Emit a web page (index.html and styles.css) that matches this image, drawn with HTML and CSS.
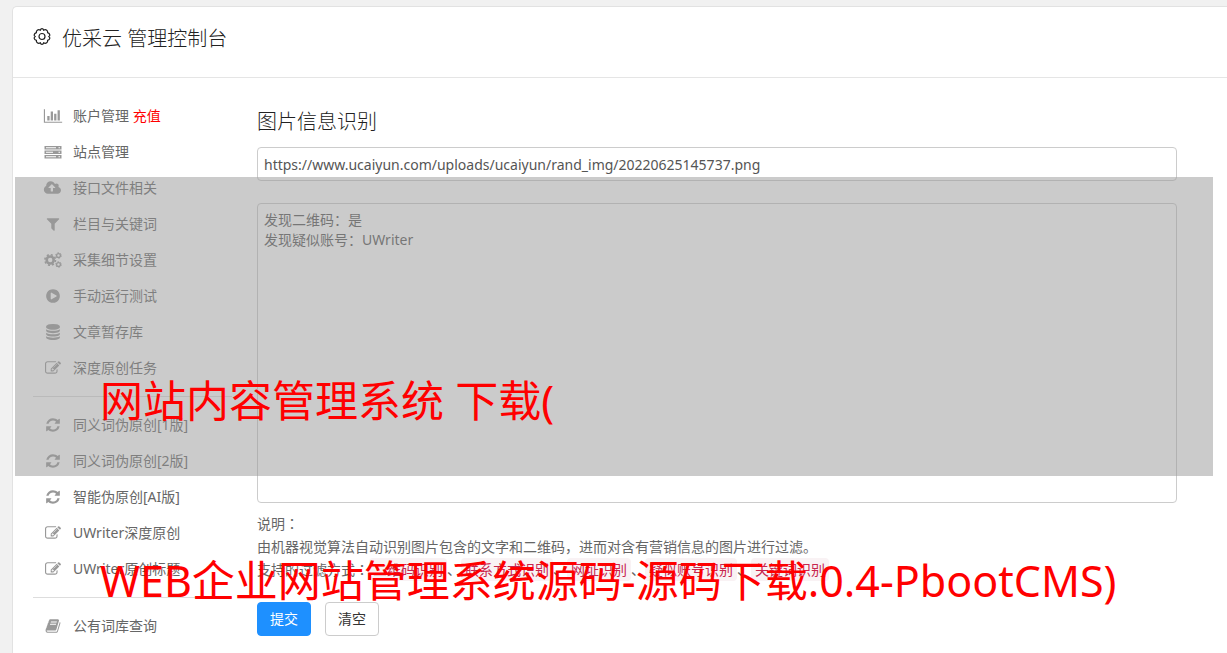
FILE: index.html
```
<!DOCTYPE html>
<html lang="zh-CN">
<head>
<meta charset="utf-8">
<title>优采云 管理控制台</title>
<link rel="stylesheet" href="styles.css">
</head>
<body>
<svg class="sprite" aria-hidden="true">
  <symbol id="edit" viewBox="0 0 1792 1792"><path d="M888 1184l116-116-152-152-116 116v56h96v96h56zm440-720q-16-16-33 1l-350 350q-17 17-1 33t33-1l350-350q17-17 1-33zm80 594v190q0 119-84.500 203.500t-203.500 84.500h-832q-119 0-203.500-84.500t-84.500-203.500v-832q0-119 84.500-203.500t203.500-84.500h832q63 0 117 25 15 7 18 23 3 17-9 29l-49 49q-14 14-32 8-23-6-45-6h-832q-66 0-113 47t-47 113v832q0 66 47 113t113 47h832q66 0 113-47t47-113v-126q0-13 9-22l64-64q15-15 35-7t20 29zm-96-738l288 288-672 672h-288v-288zm444 132l-92 92-288-288 92-92q28-28 68-28t68 28l152 152q28 28 28 68t-28 68z"/></symbol>
  <symbol id="refresh" viewBox="0 0 1792 1792"><path d="M1639 1056q0 5-1 7-64 268-268 434.500t-478 166.500q-146 0-282.500-55t-243.500-157l-129 129q-19 19-45 19t-45-19-19-45v-448q0-26 19-45t45-19h448q26 0 45 19t19 45-19 45l-137 137q71 66 161 102t187 36q134 0 250-65t186-179q11-17 53-117 8-23 30-23h192q13 0 22.500 9.500t9.500 22.500zm25-800v448q0 26-19 45t-45 19h-448q-26 0-45-19t-19-45 19-45l138-138q-148-137-349-137-134 0-250 65t-186 179q-11 17-53 117-8 23-30 23h-199q-13 0-22.500-9.500t-9.500-22.500v-7q65-268 270-434.500t480-166.500q146 0 284 55.500t245 156.500l130-129q19-19 45-19t45 19 19 45z"/></symbol>
</svg>
<div class="panel">
  <header class="panel-head">
    <svg class="gear" viewBox="0 0 18 18"><path d="M9 1.200Q10.300 1.200 10.600 2.600Q12.500 1.800 13.700 2.700Q14.900 3.600 14.600 5.100Q16.600 5.800 16.800 7.300Q17 8.300 15.900 9Q17 9.900 16.800 10.900Q16.500 12.300 14.600 12.900Q14.900 14.500 13.700 15.300Q12.400 16.200 10.600 15.400Q10.300 16.800 9 16.800Q7.700 16.800 7.400 15.400Q5.600 16.200 4.300 15.300Q3.100 14.500 3.400 12.900Q1.500 12.300 1.200 10.900Q1 9.900 2.100 9Q1 8.300 1.200 7.300Q1.400 5.800 3.400 5.100Q3.100 3.600 4.300 2.700Q5.500 1.800 7.400 2.600Q7.700 1.200 9 1.200z"/><circle cx="9" cy="9" r="3"/></svg>
    <h1 class="title">优采云 管理控制台</h1>
  </header>
  <div class="panel-body">
    <nav class="menu">
      <a class="item" href="#"><svg class="icon" viewBox="0 0 2048 1792"><path d="M640 896v512h-256v-512h256zm384-512v1024h-256v-1024h256zm1024 1152v128h-2048v-1536h128v1408h1920zm-640-896v768h-256v-768h256zm384-384v1152h-256v-1152h256z"/></svg><span>账户管理 <b class="recharge">充值</b></span></a>
      <a class="item" href="#"><svg class="icon" viewBox="0 0 18 16"><path fill-rule="evenodd" d="M.5 2h17v3.500H.5zM.5 6.500h17V10H.5zM.5 11h17v3.500H.5zM2 3.200v1h10v-1zM2 7.700v1h7v-1zM2 12.200v1h10v-1zM14.500 3.200v1h1.500v-1zM14.500 7.700v1h1.500v-1zM14.500 12.200v1h1.500v-1z"/></svg><span>站点管理</span></a>
      <a class="item" href="#"><svg class="icon" viewBox="0 0 1920 1792"><path d="M1216 864q0-14-9-23l-352-352q-9-9-23-9t-23 9l-351 351q-10 12-10 24 0 14 9 23t23 9h224v352q0 13 9.500 22.500t22.500 9.500h192q13 0 22.500-9.500t9.500-22.500v-352h224q13 0 22.500-9.500t9.500-22.500zm640 288q0 159-112.500 271.500t-271.500 112.500h-1088q-185 0-316.500-131.500t-131.500-316.500q0-130 70-240t188-165q-2-30-2-43 0-212 150-362t362-150q156 0 285.500 87t188.500 231q71-62 166-62 106 0 181 75t75 181q0 76-41 138 130 31 213.500 135.500t83.500 238.500z"/></svg><span>接口文件相关</span></a>
      <a class="item" href="#"><svg class="icon" viewBox="0 0 1792 1792"><path d="M1595 295q17 41-14 70l-493 493v742q0 42-39 59-13 5-25 5-27 0-45-19l-256-256q-19-19-19-45v-486l-493-493q-31-29-14-70 17-39 59-39h1280q42 0 59 39z"/></svg><span>栏目与关键词</span></a>
      <a class="item" href="#"><svg class="icon" viewBox="0 0 18 16"><g fill="none" stroke="currentColor"><circle cx="6.200" cy="8" r="3.500" stroke-width="2.600"/><circle cx="6.200" cy="8" r="5.300" stroke-width="1.600" stroke-dasharray="2.080 2.080"/><circle cx="14.500" cy="3.500" r="1.900" stroke-width="1.300"/><circle cx="14.500" cy="3.500" r="2.800" stroke-dasharray="1.470 1.470"/><circle cx="14.500" cy="12.500" r="1.900" stroke-width="1.300"/><circle cx="14.500" cy="12.500" r="2.800" stroke-dasharray="1.470 1.470"/></g></svg><span>采集细节设置</span></a>
      <a class="item" href="#"><svg class="icon" viewBox="0 0 1792 1792"><path d="M896 128q209 0 385.500 103t279.500 279.500 103 385.500-103 385.500-279.500 279.500-385.500 103-385.500-103-279.500-279.500-103-385.500 103-385.500 279.500-279.500 385.500-103zm384 823q32-18 32-55t-32-55l-544-320q-31-19-64-1-32 19-32 56v640q0 37 32 56 16 8 32 8 17 0 32-9z"/></svg><span>手动运行测试</span></a>
      <a class="item" href="#"><svg class="icon" viewBox="0 0 1792 1792"><path d="M896 768q237 0 443-43t325-127v170q0 69-103 128t-280 93.500-385 34.500-385-34.500-280-93.500-103-128v-170q119 84 325 127t443 43zm0 768q237 0 443-43t325-127v170q0 69-103 128t-280 93.500-385 34.500-385-34.500-280-93.500-103-128v-170q119 84 325 127t443 43zm0-384q237 0 443-43t325-127v170q0 69-103 128t-280 93.500-385 34.500-385-34.500-280-93.500-103-128v-170q119 84 325 127t443 43zm0-1152q208 0 385 34.500t280 93.500 103 128v128q0 69-103 128t-280 93.500-385 34.500-385-34.500-280-93.500-103-128v-128q0-69 103-128t280-93.500 385-34.500z"/></svg><span>文章暂存库</span></a>
      <a class="item" href="#"><svg class="icon"><use href="#edit"/></svg><span>深度原创任务</span></a>
      <hr class="rule">
      <a class="item" href="#"><svg class="icon"><use href="#refresh"/></svg><span>同义词伪原创[1版]</span></a>
      <a class="item" href="#"><svg class="icon"><use href="#refresh"/></svg><span>同义词伪原创[2版]</span></a>
      <a class="item" href="#"><svg class="icon"><use href="#refresh"/></svg><span>智能伪原创[AI版]</span></a>
      <a class="item" href="#"><svg class="icon"><use href="#edit"/></svg><span>UWriter深度原创</span></a>
      <a class="item" href="#"><svg class="icon"><use href="#edit"/></svg><span>UWriter原创标题</span></a>
      <hr class="rule">
      <a class="item" href="#"><svg class="icon" viewBox="0 0 1792 1792"><path d="M1703 478q40 57 18 129l-275 906q-19 64-76.500 107.500t-122.500 43.500h-923q-77 0-148.500-53.500t-99.500-131.500q-24-67-2-127 0-4 3-27t4-37q1-8-3-21.500t-3-19.500q2-11 8-21t16.500-23.500 16.500-23.500q23-38 45-91.500t30-91.500q3-10 .5-30t-.5-28q3-11 17-28t17-23q21-36 42-92t25-90q1-9-2.500-32t.5-28q4-13 22-30.500t22-22.500q19-26 42.500-84.500t27.500-96.500q1-8-3-25.500t-2-26.500q2-8 9-18t18-23 17-21q8-12 16.500-30.500t15-35 16-36 19.500-32 26.500-23.500 36-11.500 47.500 5.500l-1 3q38-9 51-9h761q74 0 114 56t18 130l-274 906q-36 119-71.500 153.500t-128.500 34.500h-869q-27 0-38 15-11 16-1 43 24 70 144 70h923q29 0 56-15.500t35-41.500l300-987q7-22 5-57 38 15 59 43zm-1064 2q-4 13 2 22.500t20 9.500h608q13 0 25.500-9.500t16.500-22.500l21-64q4-13-2-22.500t-20-9.500h-608q-13 0-25.500 9.500t-16.500 22.500zm-83 256q-4 13 2 22.500t20 9.500h608q13 0 25.500-9.500t16.500-22.500l21-64q4-13-2-22.500t-20-9.500h-608q-13 0-25.500 9.500t-16.500 22.500z"/></svg><span>公有词库查询</span></a>
    </nav>
    <form class="form">
      <h2 class="subtitle"><label for="url">图片信息识别</label></h2>
      <input class="field" id="url" type="text" value="https://www.ucaiyun.com/uploads/ucaiyun/rand_img/20220625145737.png">
      <textarea class="field result" aria-label="识别结果">发现二维码：是
发现疑似账号：UWriter</textarea>
      <div class="notes">
        <p>说明<span class="colon" lang="ja">：</span></p>
        <p>由机器视觉算法自动识别图片包含的文字和二维码，进而对含有营销信息的图片进行过滤。</p>
        <p>支持的过滤方式<span class="colon" lang="ja">：</span><code>二维码识别</code>、<code>联系方式识别</code>、<code>网址识别</code>、<code>疑似账号识别</code>、<code>关键词识别</code></p>
      </div>
      <div class="actions">
        <button class="btn primary" type="button">提交</button>
        <button class="btn" type="button">清空</button>
      </div>
    </form>
  </div>
</div>
<div class="shade"></div>
<p class="caption first">网站内容管理系统 下载(</p>
<p class="caption second">WEB企业网站管理系统源码-源码下载.0.4-PbootCMS)</p>
</body>
</html>
```
FILE: styles.css
```
* { box-sizing: border-box; }
html { height: 100%; overflow: hidden; }
body {
  position: relative;
  min-height: 100%;
  margin: 0;
  padding: 6px 0 0 12px;
  background: #f1f1f1;
  color: #555;
  font: 14px/20px "Noto Sans", "Noto Sans CJK SC", sans-serif;
}
h1, h2, p { margin: 0; font-weight: 400; }
.sprite { position: absolute; width: 0; height: 0; }
.panel {
  background: #fff;
  border: 1px solid #e2e2e2;
  border-right: 0;
  border-radius: 5px 0 0 0;
}
.panel-head {
  display: flex;
  align-items: flex-start;
  gap: 11px;
  height: 71px;
  padding: 16px 20px 0;
  border-bottom: 1px solid #e5e5e5;
  color: #222;
}
.gear { width: 18px; height: 27px; fill: none; stroke: currentColor; stroke-width: 1.2; }
.title { font-size: 20px; line-height: 31px; font-weight: 300; }
.panel-body { display: flex; gap: 25px; padding: 20px 50px 0 20px; }
.menu { width: 199px; flex: none; }
.item {
  display: flex;
  align-items: center;
  gap: 10px;
  height: 36px;
  padding: 0 10px;
  color: #666;
  text-decoration: none;
}
.icon { width: 20px; height: 16px; fill: currentColor; color: #999; }
.recharge { color: #f00; font-weight: 400; }
.rule { margin: 10px 0; border: 0; border-top: 1px solid #ddd; }
.form { flex: 1; display: flex; flex-direction: column; padding-top: 8px; }
.subtitle { padding-top: 1px; margin-bottom: 10px; color: #222; font-size: 20px; line-height: 30px; font-weight: 300; }
.field {
  width: 100%;
  height: 34px;
  padding: 6px;
  border: 1px solid #ccc;
  border-radius: 4px;
  background: #fff;
  color: #555;
  font: inherit;
}
.result { height: 300px; margin-top: 22px; resize: none; }
.notes { margin-top: 9px; line-height: 23px; color: #666; }
.colon { font-family: "Noto Sans CJK JP", sans-serif; line-height: 20px; }
.notes code { padding: 2px 4px; border-radius: 4px; background: #f9f2f4; color: #c7254e; font: inherit; }
.actions { display: flex; gap: 14px; padding: 21px 0 20px; }
.btn {
  height: 34px;
  padding: 0 12px;
  border: 1px solid #ccc;
  border-radius: 4px;
  background: #fff;
  color: #333;
  font: inherit;
}
.primary { border-color: #1e90ff; background: #1e90ff; color: #fff; }
.shade {
  position: absolute;
  top: 177px;
  left: 15px;
  right: 14px;
  height: 299px;
  background: rgba(151, 151, 151, .5);
}
.caption { position: absolute; left: 100px; color: #f00; font-size: 43px; line-height: 60px; white-space: nowrap; }
.first { top: 371px; }
.second { top: 551px; }
```
